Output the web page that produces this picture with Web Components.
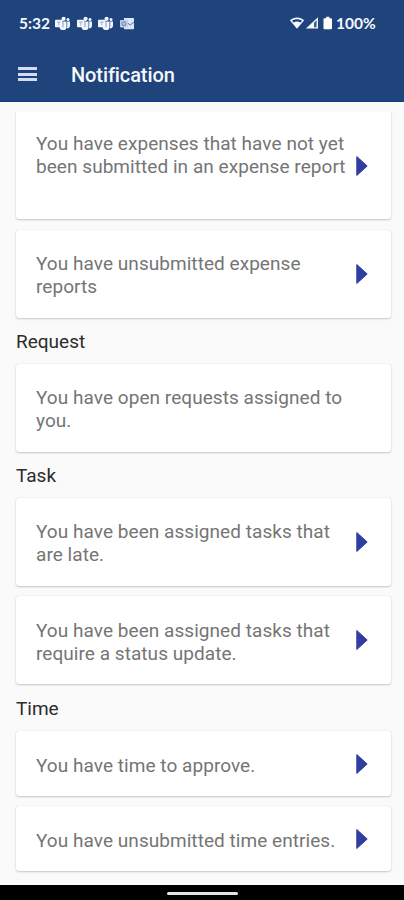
<!DOCTYPE html>
<html lang="en"><head><meta charset="utf-8"><title>Notification</title>
<style>
html,body{margin:0;height:900px;overflow:hidden;background:#fafafa;font-family:Roboto,"Liberation Sans",sans-serif}
</style></head><body>
<notification-app></notification-app>
<script>
const define=(name,html)=>customElements.define(name,class extends HTMLElement{
  constructor(){super();const t=document.createElement('template');t.innerHTML=html;
    this.attachShadow({mode:'open'}).append(t.content.cloneNode(true));}
});
define('teams-icon',`<style>:host{display:block;width:15px;height:15px}svg{display:block}</style>
<svg width="15" height="15" viewBox="0 0 15 15"><g fill="#f2f6ff"><circle cx="8.600" cy="2.800" r="2.100"/><circle cx="13" cy="3.600" r="1.500"/><path d="M4.500 5.400h7.200v5a3.600 3.600 0 0 1-7.200 0z"/><path d="M12 5.600H15v4.200a2.500 2.500 0 0 1-3 2.400z"/><rect x="0" y="3.800" width="7.600" height="7.400" rx=".8"/></g><path d="M2 6.100h3.600M3.800 6.100v3.300" stroke="#8fa2c6" stroke-width=".8" fill="none"/><path d="M8 5.200v6M11.900 5.500v5.500" stroke="#5a74a5" stroke-width=".7" fill="none"/></svg>`);
define('outlook-icon',`<style>:host{display:block;width:15px;height:13px}svg{display:block}</style>
<svg width="15" height="13" viewBox="0 0 15 13"><path d="M4 1h9a1 1 0 0 1 1 1v9.500a.8.8 0 0 1-.8.8H4z" fill="#dce6f6"/><path d="M7.500 6l2.800 2L14 5" fill="none" stroke="#536f9f" stroke-width="1"/><rect x="0" y="3" width="7.700" height="7.400" rx=".8" fill="#bdcbe4"/><circle cx="3.900" cy="6.700" r="1.900" fill="none" stroke="#6a82ae" stroke-width="1"/></svg>`);
define('status-bar',`<style>:host{display:flex;height:46px;box-sizing:border-box;padding:0 27px 0 19px;align-items:center;color:#f5f8ff;font-family:Lato,Roboto,sans-serif;font-weight:700;font-size:15.5px}
.time{width:30px;margin-right:6px;white-space:nowrap}.apps{display:flex;gap:6.700px;align-items:center;padding-top:1px}.sys{margin-left:auto;display:flex;align-items:center}.sys svg{display:block;margin-right:3px}.pct{width:41px;white-space:nowrap}</style>
<span class="time">5:32</span><div class="apps"><teams-icon></teams-icon><teams-icon></teams-icon><teams-icon></teams-icon><outlook-icon></outlook-icon></div>
<div class="sys"><svg width="44" height="14" viewBox="0 0 44 14"><path d="M.8 4.300C4.700.4 11.300.4 15.200 4.300L8 12.800z" fill="#f5f8ff"/><path d="M3 4.700C6 2.700 10 2.700 13 4.700L11.500 6.500C9.300 5.200 6.700 5.200 4.500 6.500z" fill="#1f437b"/><path d="M16.800 12.600L29 1.200v11.400z" fill="#f5f8ff"/><path d="M25 6.700L27.600 4.200v7H25z" fill="#3c5d91"/><path d="M35.500 2.200h1.700V.8h3.200v1.400H42a1 1 0 0 1 1 1v9a1 1 0 0 1-1 1h-6.500a1 1 0 0 1-1-1v-9a1 1 0 0 1 1-1z" fill="#fff"/></svg><span class="pct">100%</span></div>`);
define('app-bar',`<style>:host{display:flex;height:56px;box-sizing:border-box;padding:0 18px 1px;align-items:center}
.menu{display:grid;gap:2.500px;width:19px;margin:1px 34px 0 0}.menu i{height:3px;background:#d5dcf1}h1{margin:3px 0 0;font-size:20px;font-weight:500;color:#f5f7fd;letter-spacing:-.1px;line-height:24px}</style>
<div class="menu"><i></i><i></i><i></i></div><h1><slot></slot></h1>`);
define('notice-card',`<style>:host{display:flex;align-items:center;box-sizing:border-box;height:88px;margin:0 13px 10.500px 16px;padding:3px 23px 0 20px;background:#fff;border-radius:3px;box-shadow:0 1px 2px rgba(40,50,65,.24),0 0 1px rgba(40,50,65,.18)}
p{margin:0;flex:1;color:#757575;font-size:19px;line-height:23px;letter-spacing:.05px;white-space:nowrap}
svg{display:block;flex:none;margin-top:-3px}:host([plain]) svg{display:none}
:host([single]){height:65px;margin-bottom:10.500px;padding-top:4px}
:host([first]){height:107px;padding-top:0;border-radius:0 0 3px 3px}:host([first]) p{margin-top:-21px}:host([first]) svg{margin-top:0}
:host([last]){margin-bottom:0}</style>
<p><slot></slot></p><svg width="12" height="22" viewBox="0 0 12 22"><path d="M.8 1.500L11.200 11 .8 20.500z" fill="#303f9f" stroke="#303f9f" stroke-linejoin="round"/></svg>`);
define('section-title',`<style>:host{display:block;margin:0 16px;padding:1.700px 0 11px;height:23px;line-height:23px;font-size:19px;color:#2c2c2c}</style><slot></slot>`);
define('notification-app',`<style>:host{display:flex;flex-direction:column;width:404px;height:900px;background:#fafafa}
header{background:#1f437b;height:102px;box-sizing:border-box;border-bottom:1px solid #164078;flex:none}
main{flex:1;min-height:0;padding-top:10px;overflow:hidden}.list{overflow:hidden;height:773px}
footer{height:15px;background:#000;display:flex;justify-content:center;align-items:center;flex:none}footer i{width:71px;height:3px;border-radius:2px;background:#e4e4e4;margin-top:2px}</style>
<header><status-bar></status-bar><app-bar>Notification</app-bar></header>
<main><div class="list">
<notice-card first>You have expenses that have not yet<br>been submitted in an expense report</notice-card>
<notice-card>You have unsubmitted expense<br>reports</notice-card>
<section-title>Request</section-title>
<notice-card plain>You have open requests assigned to<br>you.</notice-card>
<section-title>Task</section-title>
<notice-card>You have been assigned tasks that<br>are late.</notice-card>
<notice-card>You have been assigned tasks that<br>require a status update.</notice-card>
<section-title>Time</section-title>
<notice-card single>You have time to approve.</notice-card>
<notice-card single last>You have unsubmitted time entries.</notice-card>
</div></main><footer><i></i></footer>`);
</script></body></html>
